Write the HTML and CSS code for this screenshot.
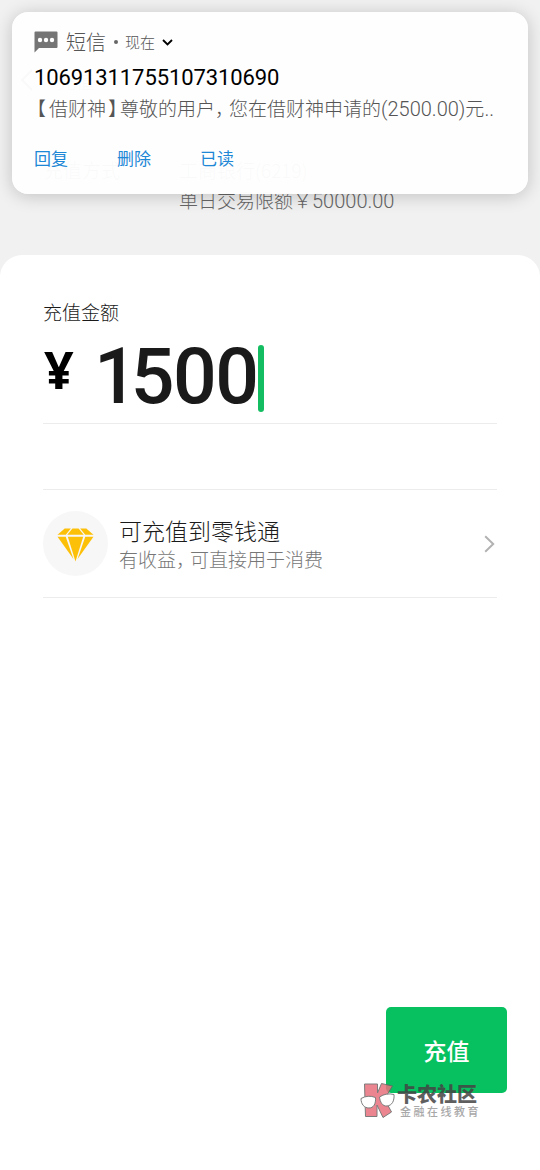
FILE: index.html
```html
<!DOCTYPE html>
<html lang="zh-CN">
<head>
    <meta charset="UTF-8" />
    <meta name="viewport" content="width=device-width, initial-scale=1" />
    <title>零钱充值</title>
    <link rel="stylesheet" href="styles.css">
</head>
<body>

    <header class="pay-header">
        <div class="nav">
            <svg class="nav-back" width="12" height="22" viewBox="0 0 12 22"><path d="M11 1L1 11l10 10" /></svg>
            <span>充值</span>
        </div>
        <div class="pay-method">
            <span class="method-label">充值方式</span>
            <div class="method-info">
                <div class="bank">工商银行(6219)</div>
                <div class="limit">单日交易限额￥<span class="num">50000.00</span></div>
            </div>
        </div>
    </header>

    <main class="sheet">
        <div class="amount-label">充值金额</div>
        <div class="amount">
            <span class="currency">¥</span>
            <span class="number">1500</span>
            <span class="cursor"></span>
        </div>

        <div class="fund">
            <div class="fund-icon">
                <svg width="37" height="34" viewBox="0 0 36 33">
                    <path d="M7.5 0.5H13.5L8.5 6.5H0.5Z" />
                    <path d="M15 0.5H21L26 6.5H10Z" />
                    <path d="M22.5 0.5H28.5L35.5 6.5H27.5Z" />
                    <path d="M0.5 8.5H8.5L16 30Z" />
                    <path d="M10.5 8.5H25.5L18 32.5Z" />
                    <path d="M27.5 8.5H35.5L20 30Z" />
                </svg>
            </div>
            <div class="fund-text">
                <div class="fund-title">可充值到零钱通</div>
                <div class="fund-desc">有收益<span class="punc">，</span>可直接用于消费</div>
            </div>
            <svg class="arrow" width="11" height="18" viewBox="0 0 11 18"><path d="M1.2 1.2L9.2 9l-8 7.8" /></svg>
        </div>

        <button class="submit">充值</button>
    </main>

    <section class="notice">
        <div class="notice-head">
            <svg width="24" height="22" viewBox="0 0 24 22">
                <path d="M1.500 0.500H22.500Q23.500 0.500 23.500 1.500V16Q23.500 17 22.500 17H5L0.500 21.500V1.500Q0.500 0.500 1.500 0.500Z" fill="#757575" />
                <circle cx="6" cy="9" r="2.2" fill="#fff" />
                <circle cx="12" cy="9" r="2.2" fill="#fff" />
                <circle cx="18" cy="9" r="2.2" fill="#fff" />
            </svg>
            <span class="app">短信</span>
            <span class="dot"></span>
            <span class="time">现在</span>
            <svg class="expand" width="11" height="7" viewBox="0 0 11 7"><path d="M1 1l4.500 4.500L10 1" /></svg>
        </div>
        <div class="sender">10691311755107310690</div>
        <div class="message"><span class="open">【</span>借财神<span class="close">】</span>尊敬的用户<span class="punc">，</span>您在借财神申请的<span class="num">(2500.00)</span>元<span class="num">..</span></div>
        <div class="actions">
            <a>回复</a>
            <a>删除</a>
            <a>已读</a>
        </div>
    </section>

    <div class="watermark">
        <svg width="35" height="37" viewBox="0 0 35 37">
            <g stroke="#666" stroke-width="1" stroke-linejoin="round">
                <path d="M4.500 2H17.500V11L21.500 1.500L32.500 4L24.500 17L31.500 30L23 35.500L17 23V34.500H5.500Z" fill="#e8707c" />
                <path d="M1 16.500Q8 12.500 15.500 15.500C16 22 13.500 26 9 26C4 26 1 22 1 16.500Z" fill="#fff" />
                <path d="M19.500 15Q26 10.500 34 12.500C34.500 19 32 23.500 27 24C22.500 24.500 20 20 19.500 15Z" fill="#fff" />
            </g>
        </svg>
        <div>
            <div class="wm-name">卡农社区</div>
            <div class="wm-sub">金融在线教育</div>
        </div>
    </div>

</body>
</html>
```

FILE: styles.css
```css
* {
    box-sizing: border-box;
}

body {
    margin: 0;
    position: relative;
    width: 540px;
    height: 1170px;
    overflow: hidden;
    display: flex;
    flex-direction: column;
    background-color: #f1f1f1;
    font-family: "Noto Sans CJK SC", sans-serif;
    font-weight: 300;
    color: #1a1a1a;
}

svg {
    display: block;
    flex-shrink: 0;
}

/* latin digits inside chinese text */
.num {
    font-family: Roboto, sans-serif;
    font-size: 20px;
    line-height: 1;
}

/* page header */
.pay-header {
    height: 255px;
    padding: 67px 43px 0 21px;
    font-size: 19px;
}

.nav {
    display: flex;
    align-items: center;
    gap: 24px;
    height: 26px;
    margin-bottom: 62px;
}

.nav-back {
    fill: none;
    stroke: #1a1a1a;
    stroke-width: 2;
}

.pay-method {
    display: flex;
    padding-left: 23px;
    line-height: 30px;
}

.method-label {
    width: 135px;
}

.limit {
    color: #666;
}

/* white sheet */
.sheet {
    flex: 1;
    display: flex;
    flex-direction: column;
    padding: 43px 43px 77px;
    border-radius: 22px 22px 0 0;
    background-color: #fff;
}

.amount-label {
    font-size: 19px;
    line-height: 28px;
}

.amount {
    display: flex;
    align-items: flex-start;
    height: 98px;
    border-bottom: 1px solid #ececec;
}

.currency {
    width: 51px;
    padding-left: 1px;
    font-family: "Noto Sans", sans-serif;
    font-size: 52px;
    font-weight: 700;
    line-height: 85px;
    color: #000;
}

.number {
    font-family: Roboto, sans-serif;
    font-size: 77px;
    font-weight: 500;
    line-height: 102px;
    letter-spacing: -1.5px;
}

.number::first-letter {
    letter-spacing: -7px;
}

.cursor {
    width: 6px;
    height: 67px;
    margin-top: 19px;
    border-radius: 3px;
    background-color: #14bd62;
}

.fund {
    display: flex;
    align-items: center;
    height: 109px;
    margin-top: 65px;
    padding-right: 2px;
    border-top: 1px solid #ececec;
    border-bottom: 1px solid #ececec;
}

.fund-icon {
    display: flex;
    align-items: center;
    justify-content: center;
    width: 65px;
    height: 65px;
    margin-right: 11px;
    padding-top: 2px;
    border-radius: 50%;
    background-color: #f7f7f7;
    fill: #fdc009;
}

.fund-text {
    flex: 1;
}

.fund-title {
    font-size: 23px;
    line-height: 29px;
}

.fund-desc {
    font-size: 19px;
    line-height: 27px;
    color: #777;
}

.arrow {
    fill: none;
    stroke: #b2b2b2;
    stroke-width: 2;
}

.submit {
    align-self: flex-end;
    width: 121px;
    height: 86px;
    margin-top: auto;
    margin-right: -10px;
    border: none;
    border-radius: 5px;
    background-color: #07c160;
    color: #fff;
    font-family: inherit;
    font-size: 23px;
    font-weight: 500;
}

/* full-width marks set narrower than one em */
.punc {
    letter-spacing: -5px;
}

.open {
    margin-left: -7px;
    margin-right: 3px;
}

.close {
    margin-left: 2px;
    letter-spacing: -7px;
}

/* sms notification over the page */
.notice {
    position: absolute;
    top: 12px;
    left: 12px;
    width: 516px;
    height: 182px;
    padding: 15px 22px;
    border-radius: 16px;
    background-color: rgba(254, 254, 254, 0.98);
    box-shadow: 0 2px 18px rgba(0, 0, 0, 0.2);
}

.notice-head {
    display: flex;
    align-items: center;
    height: 30px;
    color: #555;
}

.app {
    margin-left: 8px;
    font-size: 20px;
    line-height: 26px;
}

.dot {
    width: 4px;
    height: 4px;
    margin: 0 7px 0 8px;
    border-radius: 50%;
    background-color: #666;
}

.time {
    padding-bottom: 2px;
    font-size: 15px;
}

.expand {
    margin-left: 7px;
    fill: none;
    stroke: #000;
    stroke-width: 1.8;
}

.sender {
    height: 38px;
    font-family: Roboto, sans-serif;
    font-size: 22px;
    font-weight: 400;
    line-height: 42px;
    letter-spacing: -0.1px;
    color: #000;
}

.message {
    height: 26px;
    font-size: 19px;
    line-height: 26px;
    white-space: nowrap;
    color: #555;
}

.actions {
    display: flex;
    gap: 49px;
    margin-top: 23px;
    font-size: 17px;
    font-weight: 400;
    line-height: 28px;
    color: #1f88d6;
}

/* community mark */
.watermark {
    position: absolute;
    left: 360px;
    top: 1082px;
    display: flex;
    gap: 2px;
    opacity: 0.85;
}

.wm-name {
    font-size: 20px;
    font-weight: 900;
    line-height: 24px;
    color: #444;
}

.wm-sub {
    padding-left: 3px;
    font-size: 11px;
    font-weight: 500;
    line-height: 10px;
    letter-spacing: 2.5px;
    color: #999;
}
```
